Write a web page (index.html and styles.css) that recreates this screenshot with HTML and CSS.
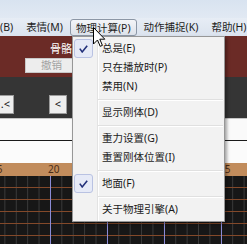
FILE: index.html
```html
<!DOCTYPE html>
<html>
<head>
<meta charset="utf-8">
<link rel="stylesheet" href="styles.css">
</head>
<body>
<div class="frame"></div>
<div class="menubar">
  <span class="mb-item first">(B)</span>
  <span class="mb-item">表情(M)</span>
  <span class="mb-item active">物理计算(P)</span>
  <span class="mb-item">动作捕捉(K)</span>
  <span class="mb-item">帮助(H)</span>
</div>
<div class="app">
  <div class="panel-red">
    <div class="panel-title">骨骼操作</div>
    <div class="red-row">
      <span class="undo">撤销</span>
    </div>
  </div>
  <div class="panel-dark">
    <span class="nav nav-first">.&lt;</span>
    <span class="nav nav-second">&lt;</span>
  </div>
  <div class="white-a"></div>
  <div class="rule-line"></div>
  <div class="white-b"></div>
  <div class="ruler">
    <span class="tick">15</span>
    <span class="tick">20</span>
    <span class="tick"></span>
    <span class="tick"></span>
    <span class="tick">35</span>
  </div>
  <div class="grid"></div>
</div>

<div class="menu">
  <div class="mi"><span class="gut"><span class="chk"><svg width="9" height="8" viewBox="0 0 9 8"><path d="M0.8 3.6 L3.2 6.9 L8.2 0.7" fill="none" stroke="#22307a" stroke-width="1.6"/></svg></span></span><span class="lbl">总是(E)</span></div>
  <div class="mi"><span class="gut"></span><span class="lbl">只在播放时(P)</span></div>
  <div class="mi"><span class="gut"></span><span class="lbl">禁用(N)</span></div>
  <div class="sep"></div>
  <div class="mi"><span class="gut"></span><span class="lbl">显示刚体(D)</span></div>
  <div class="sep"></div>
  <div class="mi"><span class="gut"></span><span class="lbl">重力设置(G)</span></div>
  <div class="mi"><span class="gut"></span><span class="lbl">重置刚体位置(I)</span></div>
  <div class="sep"></div>
  <div class="mi"><span class="gut"><span class="chk"><svg width="9" height="8" viewBox="0 0 9 8"><path d="M0.8 3.6 L3.2 6.9 L8.2 0.7" fill="none" stroke="#22307a" stroke-width="1.6"/></svg></span></span><span class="lbl">地面(F)</span></div>
  <div class="sep"></div>
  <div class="mi"><span class="gut"></span><span class="lbl">关于物理引擎(A)</span></div>
</div>

<svg class="cursor" width="13" height="21" viewBox="0 0 13 21">
  <path d="M0.5 0.5 L0.5 17 L4.5 13 L7.2 19.3 L9.4 18.4 L6.8 12.2 L11.8 12.2 Z" fill="#fff" stroke="#000" stroke-width="1" stroke-linejoin="round"/>
</svg>
</body>
</html>
```

FILE: styles.css
```css
html, body {
  margin: 0;
  padding: 0;
}
body {
  width: 247px;
  height: 244px;
  overflow: hidden;
  position: relative;
  background: #353535;
  font-family: "Noto Sans", "Noto Sans CJK SC", sans-serif;
  font-size: 10.5px;
}

.frame {
  height: 18px;
  background: linear-gradient(#d8e3f0, #e1e9f3);
}

.menubar {
  height: 18px;
  display: flex;
  gap: 1px;
  background: linear-gradient(#e7edf5, #dbe3ee);
  color: #1e1e1e;
  white-space: nowrap;
}
.mb-item {
  padding: 0 5px;
  border: 1px solid transparent;
  border-radius: 3px;
  line-height: 16px;
}
.mb-item.first {
  margin-left: -6px;
}
.mb-item.active {
  margin-top: 1px;
  border-color: #8c97a6;
  background: linear-gradient(#f3f5f8, #dde2ea);
}

.panel-red {
  height: 41px;
  box-sizing: border-box;
  padding-top: 3px;
  background: #6b2b26;
}
.panel-title {
  height: 19px;
  line-height: 19px;
  padding-left: 50px;
  color: #ffffff;
  font-size: 11px;
}
.red-row {
  display: flex;
}
.undo {
  margin-left: 25px;
  width: 53px;
  height: 15px;
  box-sizing: border-box;
  border: 1px solid #c8c8c8;
  background: #ededed;
  color: #a2a2a2;
  text-align: center;
  line-height: 13px;
}

.panel-dark {
  height: 41px;
  box-sizing: border-box;
  padding-top: 18px;
  display: flex;
  background: #353535;
}
.nav {
  height: 19px;
  width: 18px;
  box-sizing: border-box;
  border: 1px solid #9c9c9c;
  background: #eeeeee;
  color: #111;
  font-size: 11px;
  line-height: 16px;
  text-align: center;
}
.nav-first {
  margin-left: -6px;
  width: 20px;
  text-align: right;
  padding-right: 3px;
}
.nav-second {
  margin-left: 35px;
}

.white-a {
  height: 22px;
  box-sizing: border-box;
  border-top: 1px solid #c6c6c6;
  background: #fafafa;
}
.rule-line {
  height: 1px;
  background: #1a1a1a;
}
.white-b {
  height: 22px;
  background: #fbfbfb;
}

.ruler {
  height: 13px;
  display: flex;
  background: #c18c5c;
  color: #4a2d18;
  font-size: 10px;
  line-height: 13px;
  white-space: nowrap;
}
.tick {
  flex: 0 0 57px;
}
.tick:first-child {
  margin-left: -9px;
}

.grid {
  height: 68px;
  background-color: #171717;
  background-image:
    linear-gradient(to right, #8b8bd6 0 1px, transparent 1px),
    linear-gradient(to bottom, transparent 11px, #83492a 11px, #83492a 12px),
    linear-gradient(to right, #3b3b3b 0 1px, transparent 1px);
  background-size: 57px 100%, 100% 12px, 11.4px 100%;
  background-position: 50px 0, 0 0, 4.4px 0;
}

.menu {
  position: absolute;
  left: 72px;
  top: 36px;
  width: 149px;
  padding: 2px 1px;
  border: 1px solid #979797;
  background:
    linear-gradient(to right, transparent 24px, #e3e3e3 24px, #e3e3e3 25px, #ffffff 25px, #ffffff 26px, transparent 26px),
    #f2f2f2;
  box-shadow: 2px 2px 3px rgba(0, 0, 0, 0.35);
  color: #1b1b1b;
}
.mi {
  height: 19px;
  display: flex;
  align-items: center;
  white-space: nowrap;
}
.gut {
  flex: 0 0 28px;
  height: 19px;
  display: flex;
}
.chk {
  width: 19px;
  height: 19px;
  box-sizing: border-box;
  border: 1px solid #b9c2e2;
  border-radius: 3px;
  background: #e6eaf7;
  display: flex;
  align-items: center;
  justify-content: center;
}
.lbl {
  line-height: 19px;
}
.sep {
  height: 7px;
  margin-left: 24px;
  background: linear-gradient(transparent 3px, #e0e0e0 3px, #e0e0e0 4px, #ffffff 4px, #ffffff 5px, transparent 5px);
}

.cursor {
  position: absolute;
  left: 93px;
  top: 27px;
}
```
